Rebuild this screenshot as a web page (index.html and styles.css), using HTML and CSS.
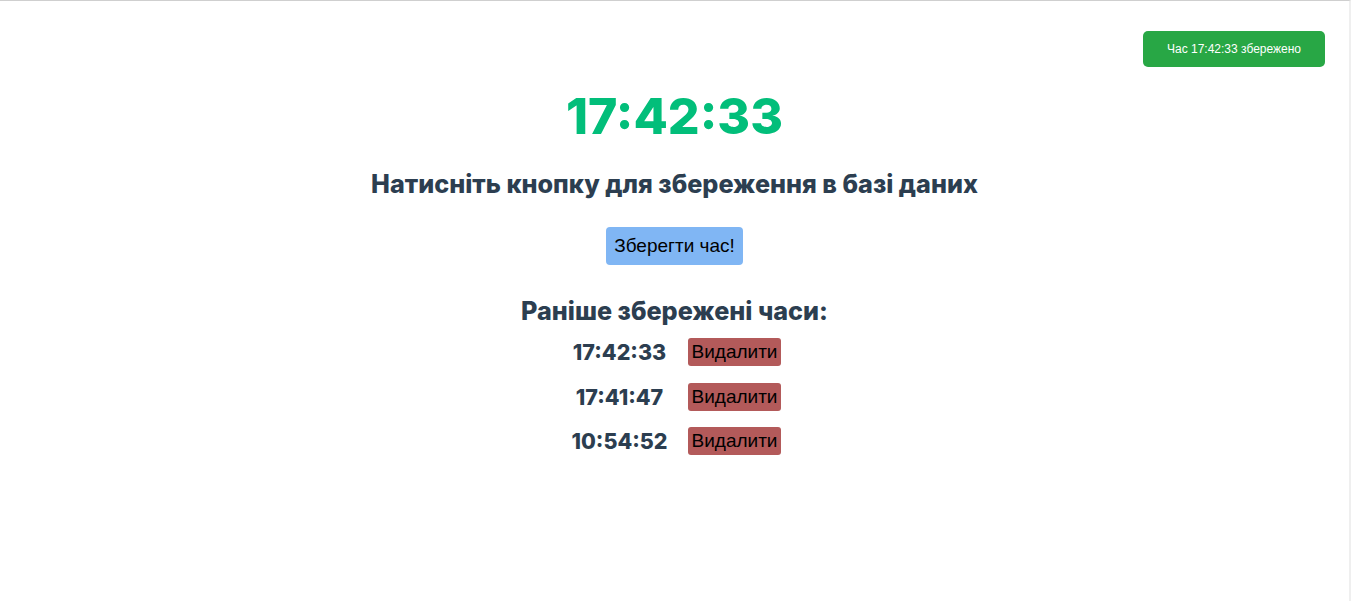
FILE: index.html
```html
<!DOCTYPE html>
<html lang="uk">
<head>
<meta charset="utf-8">
<title>Час</title>
<link rel="stylesheet" href="styles.css">
</head>
<body>
<div class="page">
  <div class="toast">Час 17:42:33 збережено</div>
  <main class="app">
    <h1 class="clock">17:42:33</h1>
    <h2 class="hint">Натисніть кнопку для збереження в базі даних</h2>
    <button class="save">Зберегти час!</button>
    <h2 class="saved-title">Раніше збережені часи:</h2>
    <ul class="list">
      <li class="row"><span class="time">17:42:33</span><button class="del">Видалити</button></li>
      <li class="row"><span class="time">17:41:47</span><button class="del">Видалити</button></li>
      <li class="row"><span class="time">10:54:52</span><button class="del">Видалити</button></li>
    </ul>
  </main>
</div>
</body>
</html>
```
FILE: styles.css
```css
html, body {
  margin: 0;
  padding: 0;
  background: #ffffff;
}
.page {
  box-sizing: border-box;
  height: 601px;
  border-top: 1px solid #cfcfcf;
  border-right: 2px solid #efefef;
  position: relative;
  font-family: "Inter", "Liberation Sans", sans-serif;
  color: #2c3e50;
}
.toast {
  position: absolute;
  top: 30px;
  right: 24px;
  width: 182px;
  height: 36px;
  box-sizing: border-box;
  background: #28a745;
  color: #ffffff;
  border-radius: 5px;
  font-family: "Liberation Sans", Arial, sans-serif;
  font-size: 12px;
  display: flex;
  align-items: center;
  justify-content: center;
}
.app {
  display: flex;
  flex-direction: column;
  align-items: center;
  padding-top: 85px;
}
.clock {
  margin: 0;
  font-size: 50px;
  line-height: 60px;
  font-weight: 800;
  color: #02be7a;
}
.hint {
  margin: 23px 0 0;
  font-size: 25.2px;
  line-height: 30px;
  font-weight: 800;
}
.save {
  margin-top: 28px;
  height: 38px;
  padding: 0 8px;
  border: none;
  border-radius: 4px;
  background: #80b6f4;
  color: #000000;
  font-family: "Liberation Sans", Arial, sans-serif;
  font-size: 19px;
}
.saved-title {
  margin: 31px 0 0;
  font-size: 25.2px;
  line-height: 30px;
  font-weight: 800;
}
.list {
  list-style: none;
  margin: 12px 0 0;
  padding: 0;
  display: flex;
  flex-direction: column;
  gap: 16.5px;
}
.row {
  display: flex;
  align-items: center;
  gap: 16px;
  height: 28px;
}
.time {
  width: 104px;
  text-align: center;
  font-size: 21.5px;
  font-weight: 800;
}
.del {
  height: 28px;
  padding: 0 4px;
  border: none;
  border-radius: 3px;
  background: #b35a5a;
  color: #000000;
  font-family: "Liberation Sans", Arial, sans-serif;
  font-size: 19px;
}
```
